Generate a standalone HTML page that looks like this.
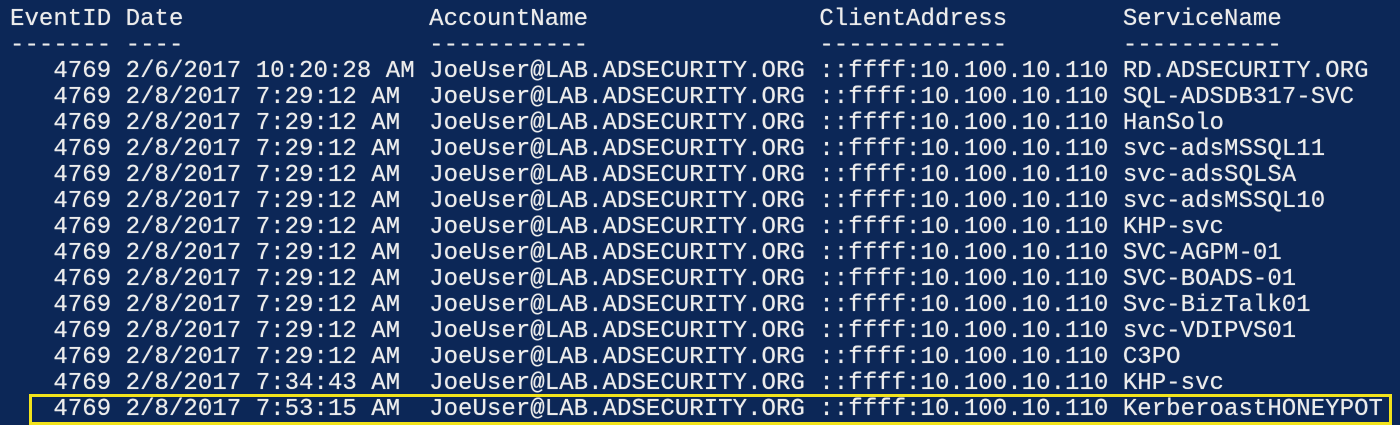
<!DOCTYPE html>
<html><head><style>
html,body{margin:0;padding:0;width:1400px;height:424px;overflow:hidden;background:#0c2757;}
pre{position:absolute;left:10px;top:7px;margin:0;font-family:"Liberation Mono",monospace;font-size:24px;line-height:26px;letter-spacing:0.05px;color:#ececec;text-shadow:0 0 0.6px #ececec;}
.box{position:absolute;left:29px;top:394px;width:1357px;height:25px;border:3px solid #f2e31c;}
</style></head><body>
<pre>EventID Date                 AccountName                ClientAddress        ServiceName
------- ----                 -----------                -------------        -----------
   4769 2/6/2017 10:20:28 AM JoeUser@LAB.ADSECURITY.ORG ::ffff:10.100.10.110 RD.ADSECURITY.ORG
   4769 2/8/2017 7:29:12 AM  JoeUser@LAB.ADSECURITY.ORG ::ffff:10.100.10.110 SQL-ADSDB317-SVC
   4769 2/8/2017 7:29:12 AM  JoeUser@LAB.ADSECURITY.ORG ::ffff:10.100.10.110 HanSolo
   4769 2/8/2017 7:29:12 AM  JoeUser@LAB.ADSECURITY.ORG ::ffff:10.100.10.110 svc-adsMSSQL11
   4769 2/8/2017 7:29:12 AM  JoeUser@LAB.ADSECURITY.ORG ::ffff:10.100.10.110 svc-adsSQLSA
   4769 2/8/2017 7:29:12 AM  JoeUser@LAB.ADSECURITY.ORG ::ffff:10.100.10.110 svc-adsMSSQL10
   4769 2/8/2017 7:29:12 AM  JoeUser@LAB.ADSECURITY.ORG ::ffff:10.100.10.110 KHP-svc
   4769 2/8/2017 7:29:12 AM  JoeUser@LAB.ADSECURITY.ORG ::ffff:10.100.10.110 SVC-AGPM-01
   4769 2/8/2017 7:29:12 AM  JoeUser@LAB.ADSECURITY.ORG ::ffff:10.100.10.110 SVC-BOADS-01
   4769 2/8/2017 7:29:12 AM  JoeUser@LAB.ADSECURITY.ORG ::ffff:10.100.10.110 Svc-BizTalk01
   4769 2/8/2017 7:29:12 AM  JoeUser@LAB.ADSECURITY.ORG ::ffff:10.100.10.110 svc-VDIPVS01
   4769 2/8/2017 7:29:12 AM  JoeUser@LAB.ADSECURITY.ORG ::ffff:10.100.10.110 C3PO
   4769 2/8/2017 7:34:43 AM  JoeUser@LAB.ADSECURITY.ORG ::ffff:10.100.10.110 KHP-svc
   4769 2/8/2017 7:53:15 AM  JoeUser@LAB.ADSECURITY.ORG ::ffff:10.100.10.110 KerberoastHONEYPOT</pre>
<div class="box"></div>
</body></html>
